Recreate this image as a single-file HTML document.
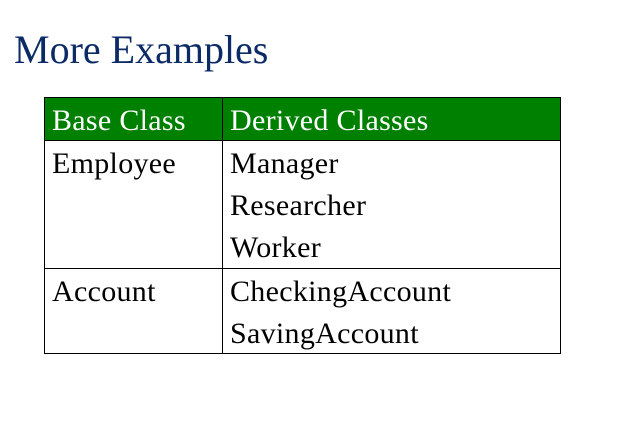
<!DOCTYPE html>
<html><head><style>
body{margin:0;width:634px;height:446px;background:#fff;position:relative;overflow:hidden;font-family:"Liberation Serif",serif}
.t{position:absolute;white-space:nowrap}
.h{position:absolute;left:14px;top:26px;font-size:40px;color:#0b2a66;line-height:48px}
.c{font-size:30px;line-height:42px;color:#000;letter-spacing:0.3px}
.w{color:#fff}
.l{position:absolute;background:#000}
</style></head><body>
<div class="h">More Examples</div>
<div style="position:absolute;left:44px;top:97px;width:517px;height:43px;background:#008000"></div>
<div class="l" style="left:44px;top:97px;width:517px;height:1px"></div>
<div class="l" style="left:44px;top:140px;width:517px;height:1px"></div>
<div class="l" style="left:44px;top:268px;width:517px;height:1px"></div>
<div class="l" style="left:44px;top:353px;width:517px;height:1px"></div>
<div class="l" style="left:44px;top:97px;width:1px;height:257px"></div>
<div class="l" style="left:222px;top:97px;width:1px;height:257px"></div>
<div class="l" style="left:560px;top:97px;width:1px;height:257px"></div>
<div class="t c w" style="left:52px;top:100px">Base Class</div>
<div class="t c w" style="left:230px;top:100px">Derived Classes</div>
<div class="t c" style="left:52px;top:143px">Employee</div>
<div class="t c" style="left:230px;top:143px">Manager<br>Researcher<br>Worker</div>
<div class="t c" style="left:52px;top:271px">Account</div>
<div class="t c" style="left:230px;top:271px">CheckingAccount<br>SavingAccount</div>
</body></html>
